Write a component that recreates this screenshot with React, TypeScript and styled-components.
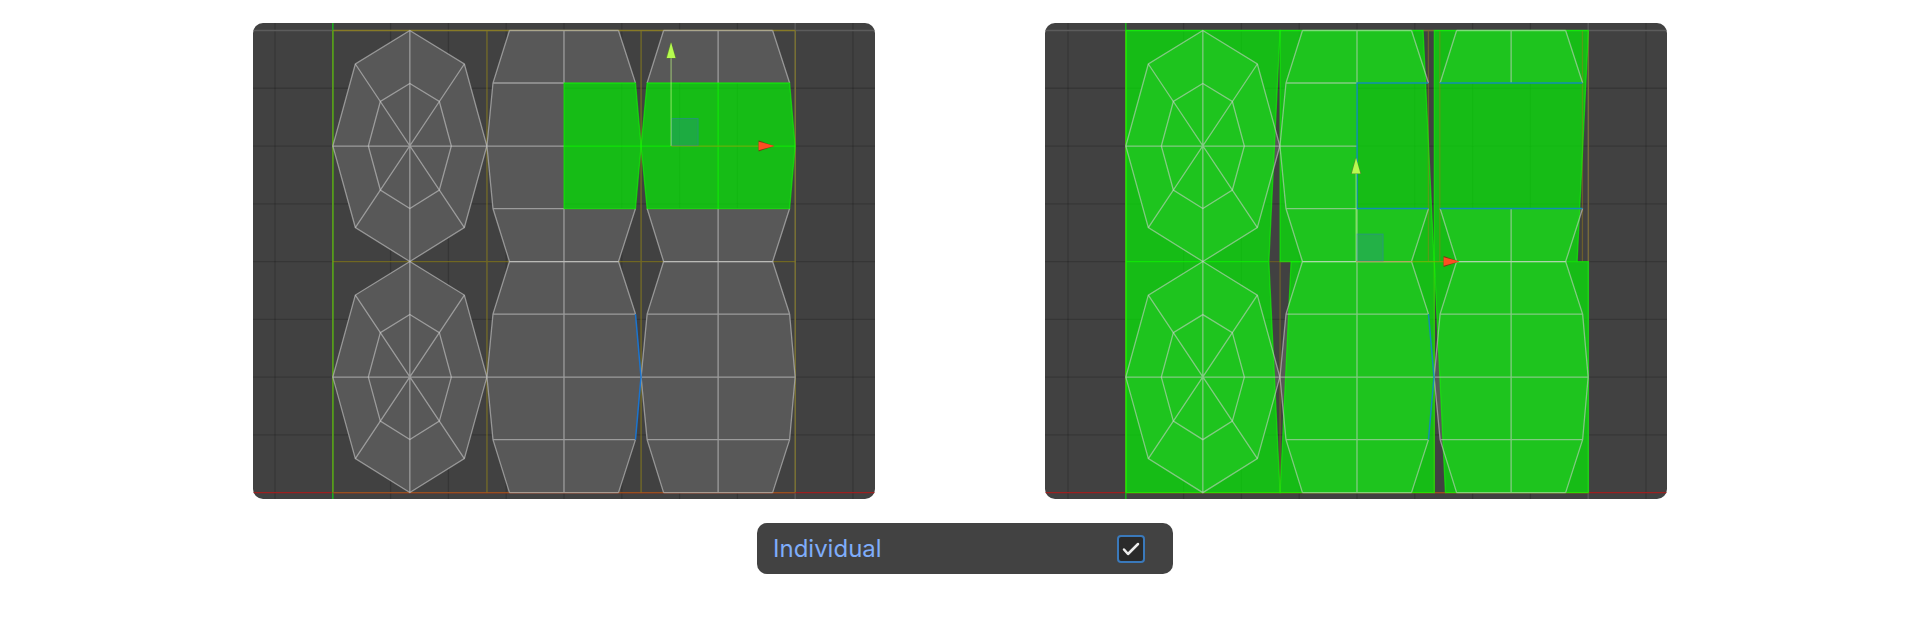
import React, { useState } from "react";
import styled, { createGlobalStyle } from "styled-components";

const GlobalStyle = createGlobalStyle`
  *, *::before, *::after { box-sizing: border-box; }
  body {
    margin: 0;
    background: #ffffff;
    font-family: Inter, "Liberation Sans", sans-serif;
  }
`;

const Page = styled.main`
  padding: 23px 24px;
`;

const Figure = styled.div`
  display: flex;
  flex-direction: column;
  gap: 24px;
  max-width: 1414px;
  margin: 0 auto;
`;

const Viewports = styled.div`
  display: grid;
  grid-template-columns: 1fr 1fr;
  gap: 12%;
`;

const Viewport = styled.section`
  overflow: hidden;
  border-radius: 10px;
  background: #414141;
`;

const Canvas = styled.svg`
  display: block;
  width: 100%;
  height: auto;
`;

const OptionRow = styled.div`
  display: grid;
  grid-template-columns: 504fr 416fr 494fr;
`;

const Option = styled.label`
  grid-column: 2;
  display: flex;
  align-items: center;
  justify-content: space-between;
  padding: 11px 28px 11px 16px;
  border-radius: 10px;
  background: #424242;
  color: #7fadfa;
  font-size: 24px;
  line-height: 29px;
  cursor: pointer;
`;

const CheckFrame = styled.span`
  display: grid;
  flex: none;
  width: 28px;
  height: 28px;

  > * { grid-area: 1 / 1; }
`;

const Checkbox = styled.input`
  appearance: none;
  width: 28px;
  height: 28px;
  margin: 0;
  border: 2px solid #3a79bb;
  border-radius: 4px;
  background: #2a2a2a;
  cursor: pointer;
`;

const CheckMark = styled.svg`
  width: 28px;
  height: 28px;
  fill: none;
  stroke: #eeeeee;
  stroke-width: 2.5;
  stroke-linecap: round;
  stroke-linejoin: round;
  pointer-events: none;
`;

/* UV space: two rows of tiles 231 high, three columns 154 wide. */
const TOP = 7.5;
const MIDDLE = 238.5;
const BOTTOM = 469.5;
const COLUMN = 154.1;
const CELL = 57.78;

const WIRE = "rgba(208,208,208,0.56)";
const YELLOW = "rgba(145,130,25,0.65)";
const GREEN = "rgba(0,255,0,0.65)";
const GREEN_EDGE = "rgba(15,255,0,0.6)";

const CAP_OUTLINE =
  "M77 0L131.5 33.5L154 115.5L131.5 197L77 231L22.5 197L0 115.5L22.5 33.5Z";
const CAP_INNER =
  "M77 53L106.5 71L118.5 115.5L106.5 159.5L77 178L47.5 159.5L35.5 115.5L47.5 71Z";
const CAP_SPOKES = "M77 0V231M0 115.5H154M22.5 33.5L131.5 197M131.5 33.5L22.5 197";

type Cut = "none" | "right" | "all";

const BARREL: Record<Cut, string> = {
  none: "M22.5 0H131.5L148.5 52.5L154 115.5L148.5 178L131.5 231H22.5L6 178L0 115.5L6 52.5Z",
  right: "M22.5 0H131.5L148.5 52.5H77V178H148.5L131.5 231H22.5L6 178L0 115.5L6 52.5Z",
  all: "M22.5 0H131.5L148.5 52.5H6ZM6 178H148.5L131.5 231H22.5Z",
};

const BARREL_ENDS = "M22.5 0H131.5M22.5 231H131.5M131.5 0L148.5 52.5M148.5 178L131.5 231";
const BARREL_LEFT = "M22.5 0L6 52.5L0 115.5L6 178L22.5 231";
const BARREL_CROSS = "M77 0V231M6 52.5H148.5M0 115.5H154M6 178H148.5";
const BARREL_SIDE = "M148.5 52.5L154 115.5L148.5 178";

const BARREL_WIRES: Record<Cut, string> = {
  none: BARREL_ENDS + BARREL_LEFT + BARREL_CROSS,
  right: BARREL_ENDS + BARREL_LEFT + "M77 0V52.5M77 178V231M6 52.5H77M0 115.5H77M6 178H77",
  all: BARREL_ENDS + "M22.5 0L6 52.5M6 178L22.5 231M77 0V52.5M77 178V231",
};

const at = (x: number, y: number) => `translate(${x} ${y})`;

const Grid = ({ x0 }: { x0: number }) => (
  <g stroke="rgba(0,0,0,0.16)" strokeWidth="1.3">
    {[-1, 1, 2, 3, 4, 5, 6, 7, 9].map((i) => (
      <path key={i} d={`M${x0 + i * CELL} 0V476`} />
    ))}
    {[1, 2, 3, 4, 5, 6, 7].map((i) => (
      <path key={i} d={`M0 ${TOP + i * 57.75}H622`} />
    ))}
    <path d={`M0 ${TOP}H622M${x0 + 8 * CELL} 0V476`} stroke="#5c5c5c" />
  </g>
);

const Axes = ({ x0 }: { x0: number }) => (
  <g fill="none">
    <path d={`M0 ${BOTTOM}H622`} stroke="#9c2020" strokeWidth="1.4" />
    <path d={`M${x0} 0V476`} stroke="#1cb01c" strokeWidth="1.5" />
    <path d={`M${x0} ${TOP}V${BOTTOM}`} stroke="#62961c" strokeWidth="1.5" />
    <path d={`M${x0} ${BOTTOM}H${x0 + 3 * COLUMN}`} stroke="#985020" strokeWidth="1.3" />
  </g>
);

const Faces = ({ x0 }: { x0: number }) => (
  <g fill="#585858">
    <path transform={at(x0, TOP)} d={CAP_OUTLINE} />
    <path transform={at(x0, MIDDLE)} d={CAP_OUTLINE} />
    <path transform={at(x0 + COLUMN, TOP)} d={BARREL.right} />
    <path transform={at(x0 + 2 * COLUMN, TOP)} d={BARREL.all} />
    <path transform={at(x0 + COLUMN, MIDDLE)} d={BARREL.none} />
    <path transform={at(x0 + 2 * COLUMN, MIDDLE)} d={BARREL.none} />
  </g>
);

const Wires = ({ x0, seam }: { x0: number; seam: string }) => (
  <g fill="none" stroke={WIRE} strokeWidth="1.3">
    {[TOP, MIDDLE].map((y) => (
      <g key={y} transform={at(x0, y)}>
        <path d={CAP_OUTLINE} />
        <path d={CAP_INNER} />
        <path d={CAP_SPOKES} />
      </g>
    ))}
    <path transform={at(x0 + COLUMN, TOP)} d={BARREL_WIRES.right} />
    <path transform={at(x0 + 2 * COLUMN, TOP)} d={BARREL_WIRES.all} />
    <path transform={at(x0 + COLUMN, MIDDLE)} d={BARREL_WIRES.none} />
    <path transform={at(x0 + 2 * COLUMN, MIDDLE)} d={BARREL_WIRES.none + BARREL_SIDE} />
    <path
      transform={at(x0 + COLUMN, MIDDLE)}
      d={BARREL_SIDE}
      stroke={seam}
      strokeWidth="1.5"
    />
  </g>
);

interface GizmoProps {
  x: number;
  y: number;
}

const Gizmo = ({ x, y }: GizmoProps) => (
  <g transform={at(x, y)}>
    <rect
      x="0.5"
      y="-27.5"
      width="26.5"
      height="27"
      fill="rgba(50,130,180,0.28)"
      stroke="rgba(50,120,200,0.42)"
    />
    <path d="M0 0V-88" stroke="rgba(190,247,130,0.5)" strokeWidth="1.4" />
    <path d="M0 0H88" stroke="rgba(190,120,20,0.5)" strokeWidth="1.2" />
    <path d="M-5.2 -87.7L-0.3 -104L5.2 -87.7Z" fill="#5f8a2c" />
    <path d="M-4.3 -88L0 -103.5L4.3 -88Z" fill="#b6fb50" />
    <path d="M87.5 -5.6L103 0L87.5 5.4Z" fill="#7b3a14" />
    <path d="M87.5 -4.4L103.5 0L87.5 4.2Z" fill="#ff4d22" />
  </g>
);

const SelectedFaces = () => {
  const x = 79.8;
  return (
    <Canvas viewBox="0 0 622 476" role="img" aria-label="UV faces before alignment">
      <Grid x0={x} />
      <Axes x0={x} />
      <path
        d={`M${x} ${TOP}H${x + 3 * COLUMN}M${x} ${MIDDLE}H${x + 3 * COLUMN}M${x + COLUMN} ${TOP}V${BOTTOM}M${x + 2 * COLUMN} ${TOP}V${BOTTOM}M${x + 3 * COLUMN} ${TOP}V${BOTTOM}`}
        stroke={YELLOW}
        strokeWidth="1.3"
        fill="none"
      />
      <Faces x0={x} />
      <path d={`M${x} ${TOP}H${x + 3 * COLUMN}`} stroke="rgba(150,130,25,0.4)" />
      <Wires x0={x} seam="#1b74cf" />
      <g fill={GREEN} stroke={GREEN_EDGE} strokeWidth="1.3">
        <path d="M311 60H382.4L388 123L382.4 185.5H311Z" />
        <path d="M394 60H536.5L542 123L536.5 185.5H394L388 123Z" />
        <path d="M311 123H542M465 60V185.5" fill="none" />
      </g>
      <Gizmo x={418} y={123} />
    </Canvas>
  );
};

const FilledFaces = () => {
  const x = 80.8;
  return (
    <Canvas viewBox="0 0 622 476" role="img" aria-label="UV faces after alignment">
      <Grid x0={x} />
      <Axes x0={x} />
      <Faces x0={x} />
      <g fill={GREEN}>
        <path d="M81 7H235L223.8 238.5L235 469.7H81Z" />
        <path d="M235 7H378L389 238.5H235Z" />
        <path d="M246 238.5H389.2V469.7H235Z" />
        <path d="M389.2 7H543.3L532 238.5H389.2Z" />
        <path d="M389.2 238.5H543.3V469.7H400.3Z" />
      </g>
      <path
        d="M378 7.5H389M383.3 7.5V238.5M394.7 7.5V238.5M537.3 7.5V238.5M543.3 7.5V238.5M224 238.5H246M235 238.5V469.5M389.2 238.5V469.5"
        fill="none"
        stroke="rgba(150,125,25,0.5)"
        strokeWidth="1.3"
      />
      <g fill="none" stroke={GREEN_EDGE} strokeWidth="1.3">
        <path d="M81 7.5H235L223.8 238.5H81ZM223.8 238.5L235 469.5H81V238.5" />
        <path d="M235 7.5H378L389 238.5H235Z" />
        <path d="M246 238.5H389.2V469.5H235Z" />
        <path d="M389.2 7.5H543.3L532 238.5H389.2Z" />
        <path d="M532 238.5H543.3V469.5H400.3L389.2 238.5" />
      </g>
      <Wires x0={x} seam="#168cb0" />
      <path
        d="M383.3 60H312V185.5H383.3M394.7 60H537.3M394.7 185.5H537.3"
        fill="none"
        stroke="#128fb2"
        strokeWidth="1.5"
      />
      <Gizmo x={311} y={238.5} />
    </Canvas>
  );
};

export default function App() {
  const [individual, setIndividual] = useState(true);

  return (
    <>
      <GlobalStyle />
      <Page>
        <Figure>
          <Viewports>
            <Viewport>
              <SelectedFaces />
            </Viewport>
            <Viewport>
              <FilledFaces />
            </Viewport>
          </Viewports>
          <OptionRow>
            <Option htmlFor="individual">
              Individual
              <CheckFrame>
                <Checkbox
                  id="individual"
                  type="checkbox"
                  checked={individual}
                  onChange={(event) => setIndividual(event.target.checked)}
                />
                {individual && (
                  <CheckMark viewBox="0 0 28 28" aria-hidden="true">
                    <path d="M7 14.5L11 19L21 9" />
                  </CheckMark>
                )}
              </CheckFrame>
            </Option>
          </OptionRow>
        </Figure>
      </Page>
    </>
  );
}
